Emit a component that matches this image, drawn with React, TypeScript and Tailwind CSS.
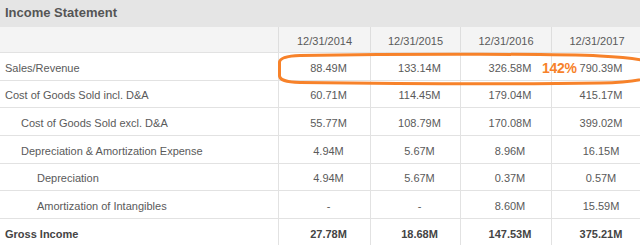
import React from 'react'

type Row = {
  label: string
  level: number
  values: string[]
  bold?: boolean
}

const years = ['12/31/2014', '12/31/2015', '12/31/2016', '12/31/2017']

const rows: Row[] = [
  { label: 'Sales/Revenue', level: 0, values: ['88.49M', '133.14M', '326.58M', '790.39M'] },
  { label: 'Cost of Goods Sold incl. D&A', level: 0, values: ['60.71M', '114.45M', '179.04M', '415.17M'] },
  { label: 'Cost of Goods Sold excl. D&A', level: 1, values: ['55.77M', '108.79M', '170.08M', '399.02M'] },
  { label: 'Depreciation & Amortization Expense', level: 1, values: ['4.94M', '5.67M', '8.96M', '16.15M'] },
  { label: 'Depreciation', level: 2, values: ['4.94M', '5.67M', '0.37M', '0.57M'] },
  { label: 'Amortization of Intangibles', level: 2, values: ['-', '-', '8.60M', '15.59M'] },
  { label: 'Gross Income', level: 0, values: ['27.78M', '18.68M', '147.53M', '375.21M'], bold: true },
]

const indent = ['pl-[5px]', 'pl-[21px]', 'pl-[37px]']
const colWidths = ['w-[92px]', 'w-[90px]', 'w-[91px]', 'w-[91px]']

export default function App() {
  return (
    <div className="relative w-[640px] h-[245px] overflow-hidden bg-white font-['Liberation_Sans',Arial,sans-serif] text-[11px] text-[#5a5a5a]">
      {/* Title */}
      <div className="h-[27px] bg-[#e5e5e5] flex items-center pl-[5px] pb-[2px]">
        <span className="text-[13px] font-bold text-[#555]">Income Statement</span>
      </div>

      {/* Header */}
      <div className="h-[26px] flex bg-[#f4f4f4] border-b border-[#e2e2e2]">
        <div className="w-[278px] shrink-0" />
        {years.map((y, i) => (
          <div key={y} className={`${colWidths[i]} shrink-0 border-l border-[#dedede] flex items-center justify-center pt-[3px]`}>
            {y}
          </div>
        ))}
      </div>

      {/* Rows */}
      {rows.map((r) => (
        <div key={r.label} className={`h-[27.67px] flex border-b border-[#e2e2e2] ${r.bold ? 'font-bold text-[#444]' : ''}`}>
          <div className={`w-[278px] shrink-0 flex items-center pt-[3px] ${indent[r.level]}`}>{r.label}</div>
          {r.values.map((v, i) => (
            <div key={i} className={`${colWidths[i]} shrink-0 border-l border-[#e2e2e2] flex items-center justify-center pl-2 pt-[3px]`}>
              {v}
            </div>
          ))}
        </div>
      ))}

      {/* Annotation */}
      <svg className="absolute left-0 top-0 pointer-events-none" width="640" height="245" viewBox="0 0 640 245">
        <path
          d="M 300 55.5 C 420 53.5 560 54 600 56 C 640 58 660 62 660 69 C 660 77 640 82 600 83 C 500 84.5 380 83.5 300 82.5 C 285 82 280 80 279.5 76 L 279.5 62 C 280 58 286 56 300 55.5 Z"
          fill="none"
          stroke="#f7822a"
          strokeWidth="3"
        />
      </svg>
      <span className="absolute left-[542px] top-[60px] text-[14px] font-bold tracking-[-0.3px] text-[#f7822a] leading-[16px]">
        142%
      </span>
    </div>
  )
}
